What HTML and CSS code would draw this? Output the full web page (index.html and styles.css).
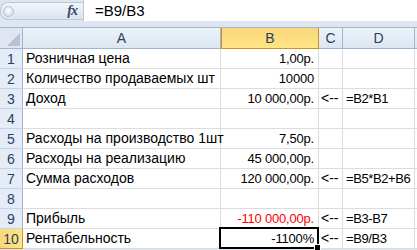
FILE: index.html
```html
<!DOCTYPE html>
<html lang="ru">
<head>
    <meta charset="UTF-8">
    <title>Рентабельность</title>
    <link rel="stylesheet" href="styles.css">
</head>
<body>
    <div class="formula-bar">
        <div class="name-box">
            <span class="grip"></span>
            <span class="fx">fx</span>
        </div>
        <div class="formula-input">=B9/B3</div>
    </div>

    <div class="sheet">
        <div class="corner"><span class="tri"></span></div>
        <div class="col-head">A</div>
        <div class="col-head active">B</div>
        <div class="col-head">C</div>
        <div class="col-head">D</div>
        <div class="col-head edge"></div>

        <div class="row-head">1</div>
        <div class="cell">Розничная цена</div>
        <div class="cell num">1,00р.</div>
        <div class="cell"></div>
        <div class="cell"></div>
        <div class="cell edge"></div>

        <div class="row-head">2</div>
        <div class="cell">Количество продаваемых шт</div>
        <div class="cell num">10000</div>
        <div class="cell"></div>
        <div class="cell"></div>
        <div class="cell edge"></div>

        <div class="row-head">3</div>
        <div class="cell">Доход</div>
        <div class="cell num">10 000,00р.</div>
        <div class="cell arrow">&lt;--</div>
        <div class="cell ref">=B2*B1</div>
        <div class="cell edge"></div>

        <div class="row-head">4</div>
        <div class="cell"></div>
        <div class="cell"></div>
        <div class="cell"></div>
        <div class="cell"></div>
        <div class="cell edge"></div>

        <div class="row-head">5</div>
        <div class="cell">Расходы на производство 1шт</div>
        <div class="cell num">7,50р.</div>
        <div class="cell"></div>
        <div class="cell"></div>
        <div class="cell edge"></div>

        <div class="row-head">6</div>
        <div class="cell">Расходы на реализацию</div>
        <div class="cell num">45 000,00р.</div>
        <div class="cell"></div>
        <div class="cell"></div>
        <div class="cell edge"></div>

        <div class="row-head">7</div>
        <div class="cell">Сумма расходов</div>
        <div class="cell num">120 000,00р.</div>
        <div class="cell arrow">&lt;--</div>
        <div class="cell ref">=B5*B2+B6</div>
        <div class="cell edge"></div>

        <div class="row-head">8</div>
        <div class="cell"></div>
        <div class="cell"></div>
        <div class="cell"></div>
        <div class="cell"></div>
        <div class="cell edge"></div>

        <div class="row-head">9</div>
        <div class="cell">Прибыль</div>
        <div class="cell num negative">-110 000,00р.</div>
        <div class="cell arrow">&lt;--</div>
        <div class="cell ref">=B3-B7</div>
        <div class="cell edge"></div>

        <div class="row-head active">10</div>
        <div class="cell">Рентабельность</div>
        <div class="cell num selected">-1100%</div>
        <div class="cell arrow">&lt;--</div>
        <div class="cell ref">=B9/B3</div>
        <div class="cell edge"></div>
    </div>
</body>
</html>
```

FILE: styles.css
```css
* {
    box-sizing: border-box;
}
body {
    margin: 0;
    width: 417px;
    height: 250px;
    overflow: hidden;
    background: #dfe6ef;
    font-family: "Liberation Sans", Arial, sans-serif;
    font-size: 14px;
    color: #000;
}
.formula-bar {
    display: flex;
    height: 28px;
    padding-bottom: 7px;
    border-bottom: 1px solid #9eb6ce;
    background: #dfe6ef;
}
.name-box {
    display: flex;
    align-items: center;
    justify-content: space-between;
    width: 83px;
    height: 18px;
    margin-top: 2px;
    padding: 0 6px 0 2px;
    background: linear-gradient(#f2f5fa, #dbe3ee);
    border: 1px solid #b9c8da;
    border-right: none;
    border-radius: 8px 0 0 8px;
}
.grip {
    width: 11px;
    height: 11px;
    border-radius: 50%;
    background: radial-gradient(circle at 50% 40%, #fdfeff, #c9d4e2);
    border: 1px solid #b4c2d4;
}
.fx {
    font-family: "Liberation Serif", "Times New Roman", serif;
    font-style: italic;
    font-weight: bold;
    font-size: 14px;
    color: #33496a;
    letter-spacing: -1px;
}
.formula-input {
    flex: 1;
    height: 21px;
    padding: 2px 0 0 11px;
    background: #fff;
    border-left: 1px solid #b9c8da;
    font-size: 15px;
}
.sheet {
    display: grid;
    grid-template-columns: 23px 198px 98px 24px 72px 2px;
    grid-template-rows: 21px;
    grid-auto-rows: 20px;
    background: #fff;
}
.corner,
.col-head,
.row-head {
    display: flex;
    align-items: center;
    justify-content: center;
    color: #27415f;
    background: linear-gradient(#eef3f9, #dbe5f1);
    border-right: 1px solid #9eb6ce;
    border-bottom: 1px solid #9eb6ce;
}
.corner {
    position: relative;
    background: #dfe6ef;
}
.corner .tri {
    position: absolute;
    right: 2px;
    bottom: 2px;
    width: 0;
    height: 0;
    border-left: 13px solid transparent;
    border-bottom: 13px solid #b6c3d4;
}
.row-head {
    background: #e4ecf7;
    border-bottom-color: #c5d3e3;
}
.col-head.active {
    background: linear-gradient(#f9d77e, #ffe583);
    border: 1px solid #c9912e;
    border-top: none;
}
.row-head.active {
    background: linear-gradient(90deg, #f9d77e, #ffe583);
    border-bottom-color: #c9912e;
    border-right-color: #c9912e;
}
.col-head.edge,
.cell.edge {
    border-right: none;
}
.cell {
    padding: 0 3px;
    line-height: 19px;
    white-space: nowrap;
    overflow: visible;
    border-right: 1px solid #dadcdd;
    border-bottom: 1px solid #dadcdd;
}
.cell.num,
.cell.ref {
    font-size: 13px;
    letter-spacing: -0.2px;
}
.cell.ref {
    letter-spacing: -0.4px;
}
.cell.num {
    text-align: right;
    padding-right: 4px;
}
.cell.arrow {
    padding-left: 2px;
}
.negative {
    color: #ff0000;
}
.selected {
    position: relative;
}
.selected::after {
    content: "";
    position: absolute;
    left: -2px;
    top: -2px;
    right: -1px;
    bottom: -1px;
    border: 2px solid #000;
}
.selected::before {
    content: "";
    position: absolute;
    right: -3px;
    bottom: -3px;
    width: 5px;
    height: 5px;
    background: #000;
    border: 1px solid #fff;
    z-index: 1;
}
```
